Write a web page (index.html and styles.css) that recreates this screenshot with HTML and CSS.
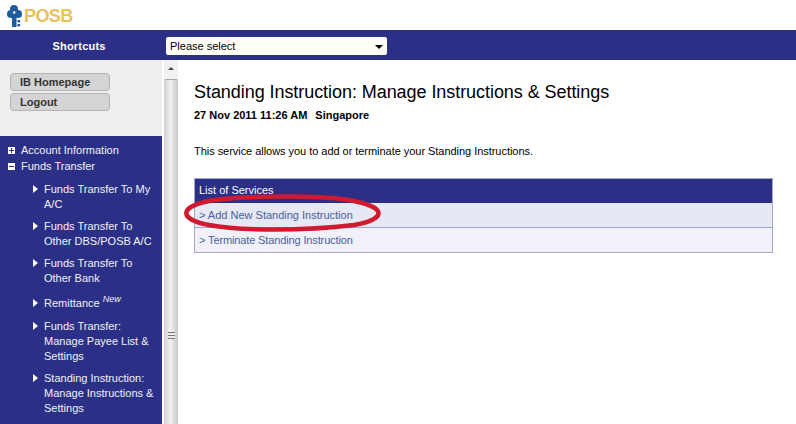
FILE: index.html
```html
<!DOCTYPE html>
<html>
    <head>
        <title>POSB Internet Banking</title>
        <link rel="stylesheet" href="styles.css">
    </head>
    <body>
        <div class="logo-bar">
            <svg class="logo-key" width="17" height="24" viewBox="0 0 17 24">
                <circle cx="7" cy="5" r="4" fill="#1f5c9e"/>
                <circle cx="4" cy="10" r="4" fill="#1f5c9e"/>
                <circle cx="11" cy="10" r="4" fill="#1f5c9e"/>
                <rect x="5" y="8" width="4.5" height="15" fill="#1f5c9e"/>
                <circle cx="7.2" cy="8.5" r="1.3" fill="#fff"/>
                <rect x="10.5" y="16" width="2.6" height="2.4" fill="#1f5c9e"/>
                <rect x="10.5" y="20" width="2.6" height="2.4" fill="#1f5c9e"/>
            </svg>
            <span class="logo-text">POSB</span>
        </div>
        <div class="top-nav">
            <div class="shortcuts">Shortcuts</div>
            <div class="select-box">
                <span>Please select</span>
                <span class="select-arrow"></span>
            </div>
        </div>
        <div class="page">
            <div class="sidebar">
                <div class="side-buttons">
                    <div class="side-btn">IB Homepage</div>
                    <div class="side-btn">Logout</div>
                </div>
                <div class="menu">
                    <div class="menu-head"><span class="toggle plus"></span>Account Information</div>
                    <div class="menu-head"><span class="toggle"></span>Funds Transfer</div>
                    <ul class="submenu">
                        <li>Funds Transfer To My A/C</li>
                        <li>Funds Transfer To Other DBS/POSB A/C</li>
                        <li>Funds Transfer To Other Bank</li>
                        <li class="with-new">Remittance <sup class="new">New</sup></li>
                        <li>Funds Transfer: Manage Payee List &amp; Settings</li>
                        <li>Standing Instruction: Manage Instructions &amp; Settings</li>
                    </ul>
                </div>
            </div>
            <div class="scrollbar">
                <div class="scroll-up"></div>
                <div class="scroll-thumb"><span class="grip"></span></div>
            </div>
            <div class="content">
                <h1>Standing Instruction: Manage Instructions &amp; Settings</h1>
                <div class="stamp"><span>27 Nov 2011 11:26 AM</span><span>Singapore</span></div>
                <p class="intro">This service allows you to add or terminate your Standing Instructions.</p>
                <div class="services">
                    <div class="services-head">List of Services</div>
                    <div class="services-row first">&gt; Add New Standing Instruction</div>
                    <div class="services-row last">&gt; Terminate Standing Instruction</div>
                    <svg class="ring" width="202" height="42" viewBox="0 0 202 42">
                        <path d="M30 7 C70 2 150 2 174 9 C201 15 203 26 170 32 C120 38 55 38 25 32 C-6 26 -6 13 30 7" fill="none" stroke="#cf1a30" stroke-width="4.5"/>
                    </svg>
                </div>
            </div>
        </div>
    </body>
</html>
```
FILE: styles.css
```css
body {
    margin: 0;
    height: 424px;
    overflow: hidden;
    background: #fff;
    font-family: "Liberation Sans", Arial, sans-serif;
    font-size: 11px;
    color: #000;
}

.logo-bar {
    height: 30px;
    display: flex;
    align-items: flex-start;
    padding: 4px 0 0 7px;
    box-sizing: border-box;
}
.logo-text {
    font-size: 18px;
    font-weight: bold;
    color: #e8c25a;
    line-height: 21px;
    margin: 2px 0 0 0;
    letter-spacing: -0.6px;
}

.top-nav {
    height: 30px;
    padding-top: 1px;
    box-sizing: border-box;
    background: #2b3086;
    display: flex;
    align-items: center;
}
.shortcuts {
    width: 158px;
    text-align: center;
    color: #fff;
    font-weight: bold;
    letter-spacing: 0.2px;
}
.select-box {
    margin-left: 8px;
    width: 221px;
    height: 18px;
    box-sizing: border-box;
    background: #fffff8;
    border-radius: 2px;
    display: flex;
    justify-content: space-between;
    align-items: center;
    padding: 0 4px;
}
.select-arrow {
    width: 0;
    height: 0;
    margin-top: 2px;
    border-left: 4px solid transparent;
    border-right: 4px solid transparent;
    border-top: 4px solid #000;
}

.page {
    display: flex;
    height: 364px;
}
.sidebar {
    width: 162px;
    flex: none;
    display: flex;
    flex-direction: column;
    background: #eeeeee;
    overflow: hidden;
}
.side-buttons {
    height: 76px;
    flex: none;
    padding: 13px 0 0 10px;
    box-sizing: border-box;
    display: flex;
    flex-direction: column;
    gap: 2px;
}
.side-btn {
    width: 100px;
    height: 18px;
    line-height: 17px;
    box-sizing: border-box;
    padding-left: 9px;
    background: #d4d4d4;
    border: 1px solid #b4b4b4;
    border-radius: 4px;
    font-weight: bold;
    color: #333;
}
.menu {
    flex: 1;
    background: #2b3086;
    color: #f0f0f6;
    padding-top: 6px;
}
.menu-head {
    display: flex;
    align-items: center;
    height: 16px;
    padding-left: 8px;
}
.toggle {
    width: 7px;
    height: 7px;
    margin-right: 6px;
    background: linear-gradient(#2b3086, #2b3086) center / 5px 1px no-repeat, #fff;
}
.toggle.plus {
    background: linear-gradient(#2b3086, #2b3086) center / 5px 1px no-repeat,
        linear-gradient(#2b3086, #2b3086) center / 1px 5px no-repeat, #fff;
}
.submenu {
    list-style: none;
    margin: 0;
    padding: 8px 8px 0 44px;
}
.submenu li {
    position: relative;
    line-height: 15px;
    margin-bottom: 7px;
}
.submenu li::before {
    content: "";
    position: absolute;
    left: -11px;
    top: 3px;
    border-left: 5px solid #fff;
    border-top: 4px solid transparent;
    border-bottom: 4px solid transparent;
}
.submenu .with-new {
    margin-top: 10px;
    margin-bottom: 8px;
}
.new {
    font-size: 9px;
    font-style: italic;
    line-height: 0;
}

.scrollbar {
    width: 16px;
    flex: none;
    padding-left: 2px;
    box-sizing: border-box;
    display: flex;
    flex-direction: column;
    overflow: hidden;
}
.scroll-up {
    height: 19px;
    flex: none;
    background: #f1f1f1;
    position: relative;
}
.scroll-up::after {
    content: "";
    position: absolute;
    left: 4px;
    top: 7px;
    border-left: 3px solid transparent;
    border-right: 3px solid transparent;
    border-bottom: 3px solid #444;
}
.scroll-thumb {
    flex: none;
    height: 512px;
    background: linear-gradient(90deg, #cfcfcf, #f2f2f2 45%, #c6c6c6);
    border-radius: 2px 2px 0 0;
    box-shadow: inset 0 1px 0 #aaa;
    display: flex;
    justify-content: center;
    align-items: center;
}
.grip {
    width: 7px;
    height: 7px;
    background: repeating-linear-gradient(#777 0 1px, #eee 1px 3px);
}

.content {
    flex: 1;
    padding: 21px 23px 0 16px;
}
h1 {
    margin: 0;
    font-size: 18px;
    font-weight: normal;
    line-height: 22px;
    letter-spacing: -0.06px;
}
.stamp {
    margin-top: 6px;
    font-weight: bold;
    display: flex;
    gap: 8px;
    line-height: 13px;
}
.intro {
    margin: 23px 0 0;
    line-height: 13px;
    letter-spacing: -0.04px;
}
.services {
    margin-top: 20px;
    position: relative;
    border: 1px solid #a3a6c4;
}
.services-head {
    height: 24px;
    line-height: 23px;
    padding-left: 4px;
    background: #2b3086;
    color: #fff;
}
.services-row {
    height: 24px;
    line-height: 24px;
    padding-left: 4px;
    background: #e6e8f3;
    color: #4a5f9a;
    border-top: 1px solid #a3a6c4;
}
.services-row.first {
    border-top: 0;
}
.services-row.last {
    background: #f1f2f9;
    letter-spacing: -0.13px;
}
.ring {
    position: absolute;
    left: -11px;
    top: 14px;
    overflow: visible;
}
```
